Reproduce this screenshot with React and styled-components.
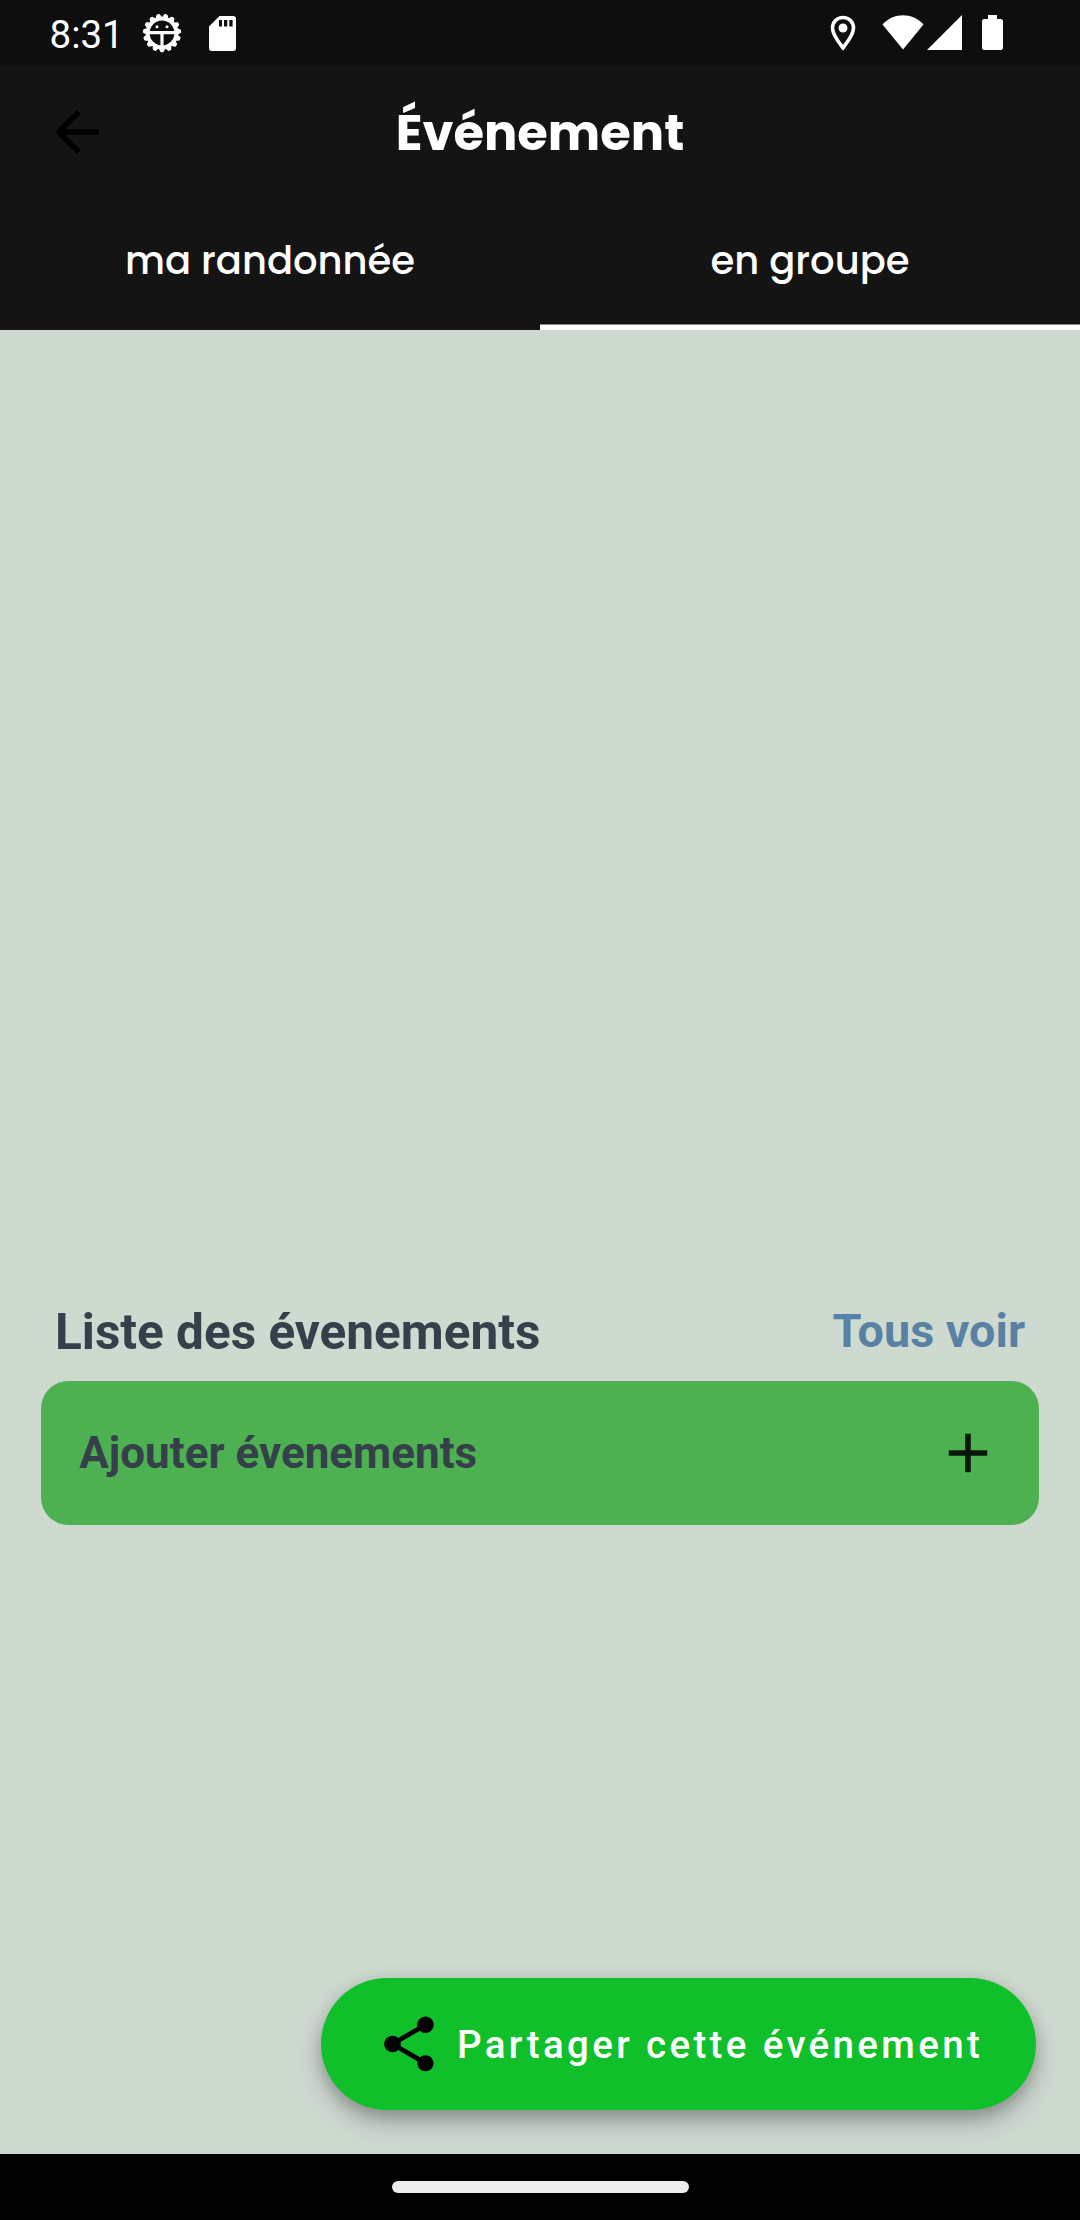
import React from "react";
import styled, { createGlobalStyle } from "styled-components";

const Global = createGlobalStyle`
  * { box-sizing: border-box; }
  body { margin: 0; background: #ced9d0; }
`;

const Screen = styled.div`
  width: 1080px;
  height: 2220px;
  display: flex;
  flex-direction: column;
  background: #ced9d0;
  font-family: Roboto, sans-serif;
  overflow: hidden;
`;

const StatusBar = styled.div`
  height: 66px;
  flex: none;
  display: flex;
  align-items: center;
  justify-content: space-between;
  background: #0e0e0e;
  padding: 0 77px 0 49.5px;
`;

const StatusGroup = styled.div`
  display: flex;
  align-items: center;
  margin-bottom: ${(p) => p.$lift || 0}px;
`;

const Clock = styled.span`
  font-size: 38.5px;
  line-height: 48px;
  color: #fff;
  margin-top: 3px;
  width: 92px;
`;

const Icon = styled.svg`
  display: block;
  flex: none;
  margin-left: ${(p) => p.$gap || 0}px;
`;

const Header = styled.header`
  height: 132px;
  flex: none;
  display: grid;
  grid-template-columns: 154px 1fr 154px;
  align-items: center;
  background: #141414;
`;

const BackButton = styled.button`
  border: 0;
  padding: 0 0 0 44px;
  background: none;
`;

const Title = styled.h1`
  margin: 0;
  padding-top: 2px;
  text-align: center;
  font: 700 49.5px/60px Poppins, Inter, sans-serif;
  color: #fff;
`;

const Tabs = styled.nav`
  height: 132px;
  flex: none;
  display: flex;
  background: #141414;
`;

const Tab = styled.button`
  flex: 1;
  border: 0;
  padding: 0 0 7px;
  background: none;
  color: #fff;
  font: 500 38.5px/48px Poppins, Inter, sans-serif;
  box-shadow: ${(p) => (p.$active ? "inset 0 -5.5px #fff" : "none")};
`;

const Content = styled.main`
  flex: 1;
  display: flex;
  flex-direction: column;
  padding: 971px 41.25px 0;
`;

const ListHeader = styled.div`
  display: flex;
  justify-content: space-between;
  align-items: center;
  height: 60px;
  margin-bottom: 20.25px;
  padding: 0 13.75px;
`;

const ListTitle = styled.h2`
  margin: 0;
  padding-top: 2px;
  font-size: 49.5px;
  line-height: 60px;
  font-weight: 700;
  color: #36404a;
`;

const SeeAll = styled.a`
  font-size: 46.75px;
  line-height: 60px;
  font-weight: 700;
  color: #5881a3;
`;

const AddCard = styled.button`
  height: 143.25px;
  flex: none;
  display: flex;
  align-items: center;
  justify-content: space-between;
  border: 0;
  border-radius: 27.5px;
  padding: 0 38px;
  background: #4db051;
  color: #36404a;
  font: 700 44px/52px Roboto, sans-serif;
`;

const ShareButton = styled.button`
  height: 132px;
  width: 715px;
  flex: none;
  display: flex;
  align-items: center;
  align-self: flex-end;
  margin: auto 2.75px 44px 0;
  border: 0;
  border-radius: 66px;
  padding: 0 0 0 55px;
  background: #10c02a;
  color: #fff;
  font: 500 38.5px/46px Roboto, sans-serif;
  letter-spacing: 3.35px;
  white-space: nowrap;
  box-shadow: 0 9px 17px -2px rgba(0, 0, 0, 0.22), 0 14px 30px rgba(0, 0, 0, 0.15),
    0 2px 20px rgba(0, 0, 0, 0.06);
`;

const ShareLabel = styled.span`
  margin-left: 15px;
  padding-top: 2px;
`;

const NavBar = styled.footer`
  position: relative;
  height: 66px;
  flex: none;
  display: flex;
  align-items: center;
  justify-content: center;
  background: #000;
`;

const HomePill = styled.div`
  width: 297px;
  height: 12px;
  border-radius: 6px;
  background: #ececec;
`;

const teeth = Array.from({ length: 15 }, (_, i) => 90 + i * 24);

function GearIcon() {
  return (
    <Icon width="40" height="40" viewBox="-20 -20 40 40">
      <g fill="#fff" stroke="#fff" strokeWidth="1.5" strokeLinejoin="round">
        {teeth.map((a) => (
          <path key={a} transform={`rotate(${a})`} d="M14.5 -3 L18.4 -1 V1 L14.5 3Z" />
        ))}
      </g>
      <circle r="14.2" fill="none" stroke="#fff" strokeWidth="3.6" />
      <path d="M-13 -0.3H13M0 -0.3V14" stroke="#fff" strokeWidth="3.2" fill="none" />
      <circle cx="-5" cy="-6.2" r="1.5" fill="#fff" />
      <circle cx="5" cy="-6.2" r="1.5" fill="#fff" />
    </Icon>
  );
}

export default function App() {
  return (
    <>
      <Global />
      <Screen>
        <StatusBar>
          <StatusGroup>
            <Clock>8:31</Clock>
            <GearIcon />
            <Icon width="27" height="35" viewBox="0 0 27 35" $gap={27.5}>
              <path
                fill="#fff"
                fillRule="evenodd"
                d="M10.5 0H24a3 3 0 0 1 3 3V32a3 3 0 0 1-3 3H3a3 3 0 0 1-3-3V10.5ZM10 4V10.5H13V4ZM15 4V10.5H18.3V4ZM20.3 4V10.5H23.6V4Z"
              />
            </Icon>
          </StatusGroup>
          <StatusGroup $lift={1}>
            <Icon width="26" height="36" viewBox="0 0 26 36">
              <path
                fill="none"
                stroke="#fff"
                strokeWidth="3.6"
                d="M13 2.5C7 2.5 2.5 7 2.5 13C2.5 20 9 27.5 13 32.8C17 27.5 23.5 20 23.5 13C23.5 7 19 2.5 13 2.5Z"
              />
              <circle cx="13" cy="13" r="4.5" fill="#fff" />
            </Icon>
            <Icon width="42" height="35" viewBox="0 0 42 35" $gap={26.5}>
              <path fill="#fff" d="M0.5 9.5C12 -2.8 30 -2.8 41.5 9.5L21 34.5Z" />
            </Icon>
            <Icon width="35" height="35" viewBox="0 0 35 35" $gap={3}>
              <path fill="#fff" d="M35 0V35H0Z" />
            </Icon>
            <Icon width="21" height="35" viewBox="0 0 21 35" $gap={20}>
              <path fill="#fff" d="M6 0H15V4H19.5L21 5.5V33.5L19.5 35H1.5L0 33.5V5.5L1.5 4H6Z" />
            </Icon>
          </StatusGroup>
        </StatusBar>
        <Header>
          <BackButton aria-label="Retour">
            <Icon width="66" height="66" viewBox="0 0 24 24">
              <path fill="#000" d="M20 11H7.83l5.59-5.59L12 4l-8 8 8 8 1.41-1.41L7.83 13H20v-2z" />
            </Icon>
          </BackButton>
          <Title>Événement</Title>
        </Header>
        <Tabs>
          <Tab>ma randonnée</Tab>
          <Tab $active>en groupe</Tab>
        </Tabs>
        <Content>
          <ListHeader>
            <ListTitle>Liste des évenements</ListTitle>
            <SeeAll>Tous voir</SeeAll>
          </ListHeader>
          <AddCard>
            <span>Ajouter évenements</span>
            <Icon width="66" height="66" viewBox="0 0 24 24">
              <path fill="#000" fillOpacity="0.87" d="M19 13h-6v6h-2v-6H5v-2h6V5h2v6h6v2z" />
            </Icon>
          </AddCard>
          <ShareButton>
            <Icon width="66" height="66" viewBox="0 0 24 24">
              <path
                fill="#000"
                d="M18 16.08c-.76 0-1.44.3-1.96.77L8.91 12.7c.05-.23.09-.46.09-.7s-.04-.47-.09-.7l7.05-4.11c.54.5 1.25.81 2.04.81 1.66 0 3-1.34 3-3s-1.34-3-3-3-3 1.34-3 3c0 .24.04.47.09.7L8.04 9.81C7.5 9.31 6.79 9 6 9c-1.66 0-3 1.34-3 3s1.34 3 3 3c.79 0 1.5-.31 2.04-.81l7.12 4.16c-.05.21-.08.43-.08.65 0 1.61 1.31 2.92 2.92 2.92s2.92-1.31 2.92-2.92-1.31-2.92-2.92-2.92z"
              />
            </Icon>
            <ShareLabel>Partager cette événement</ShareLabel>
          </ShareButton>
        </Content>
        <NavBar>
          <HomePill />
        </NavBar>
      </Screen>
    </>
  );
}
